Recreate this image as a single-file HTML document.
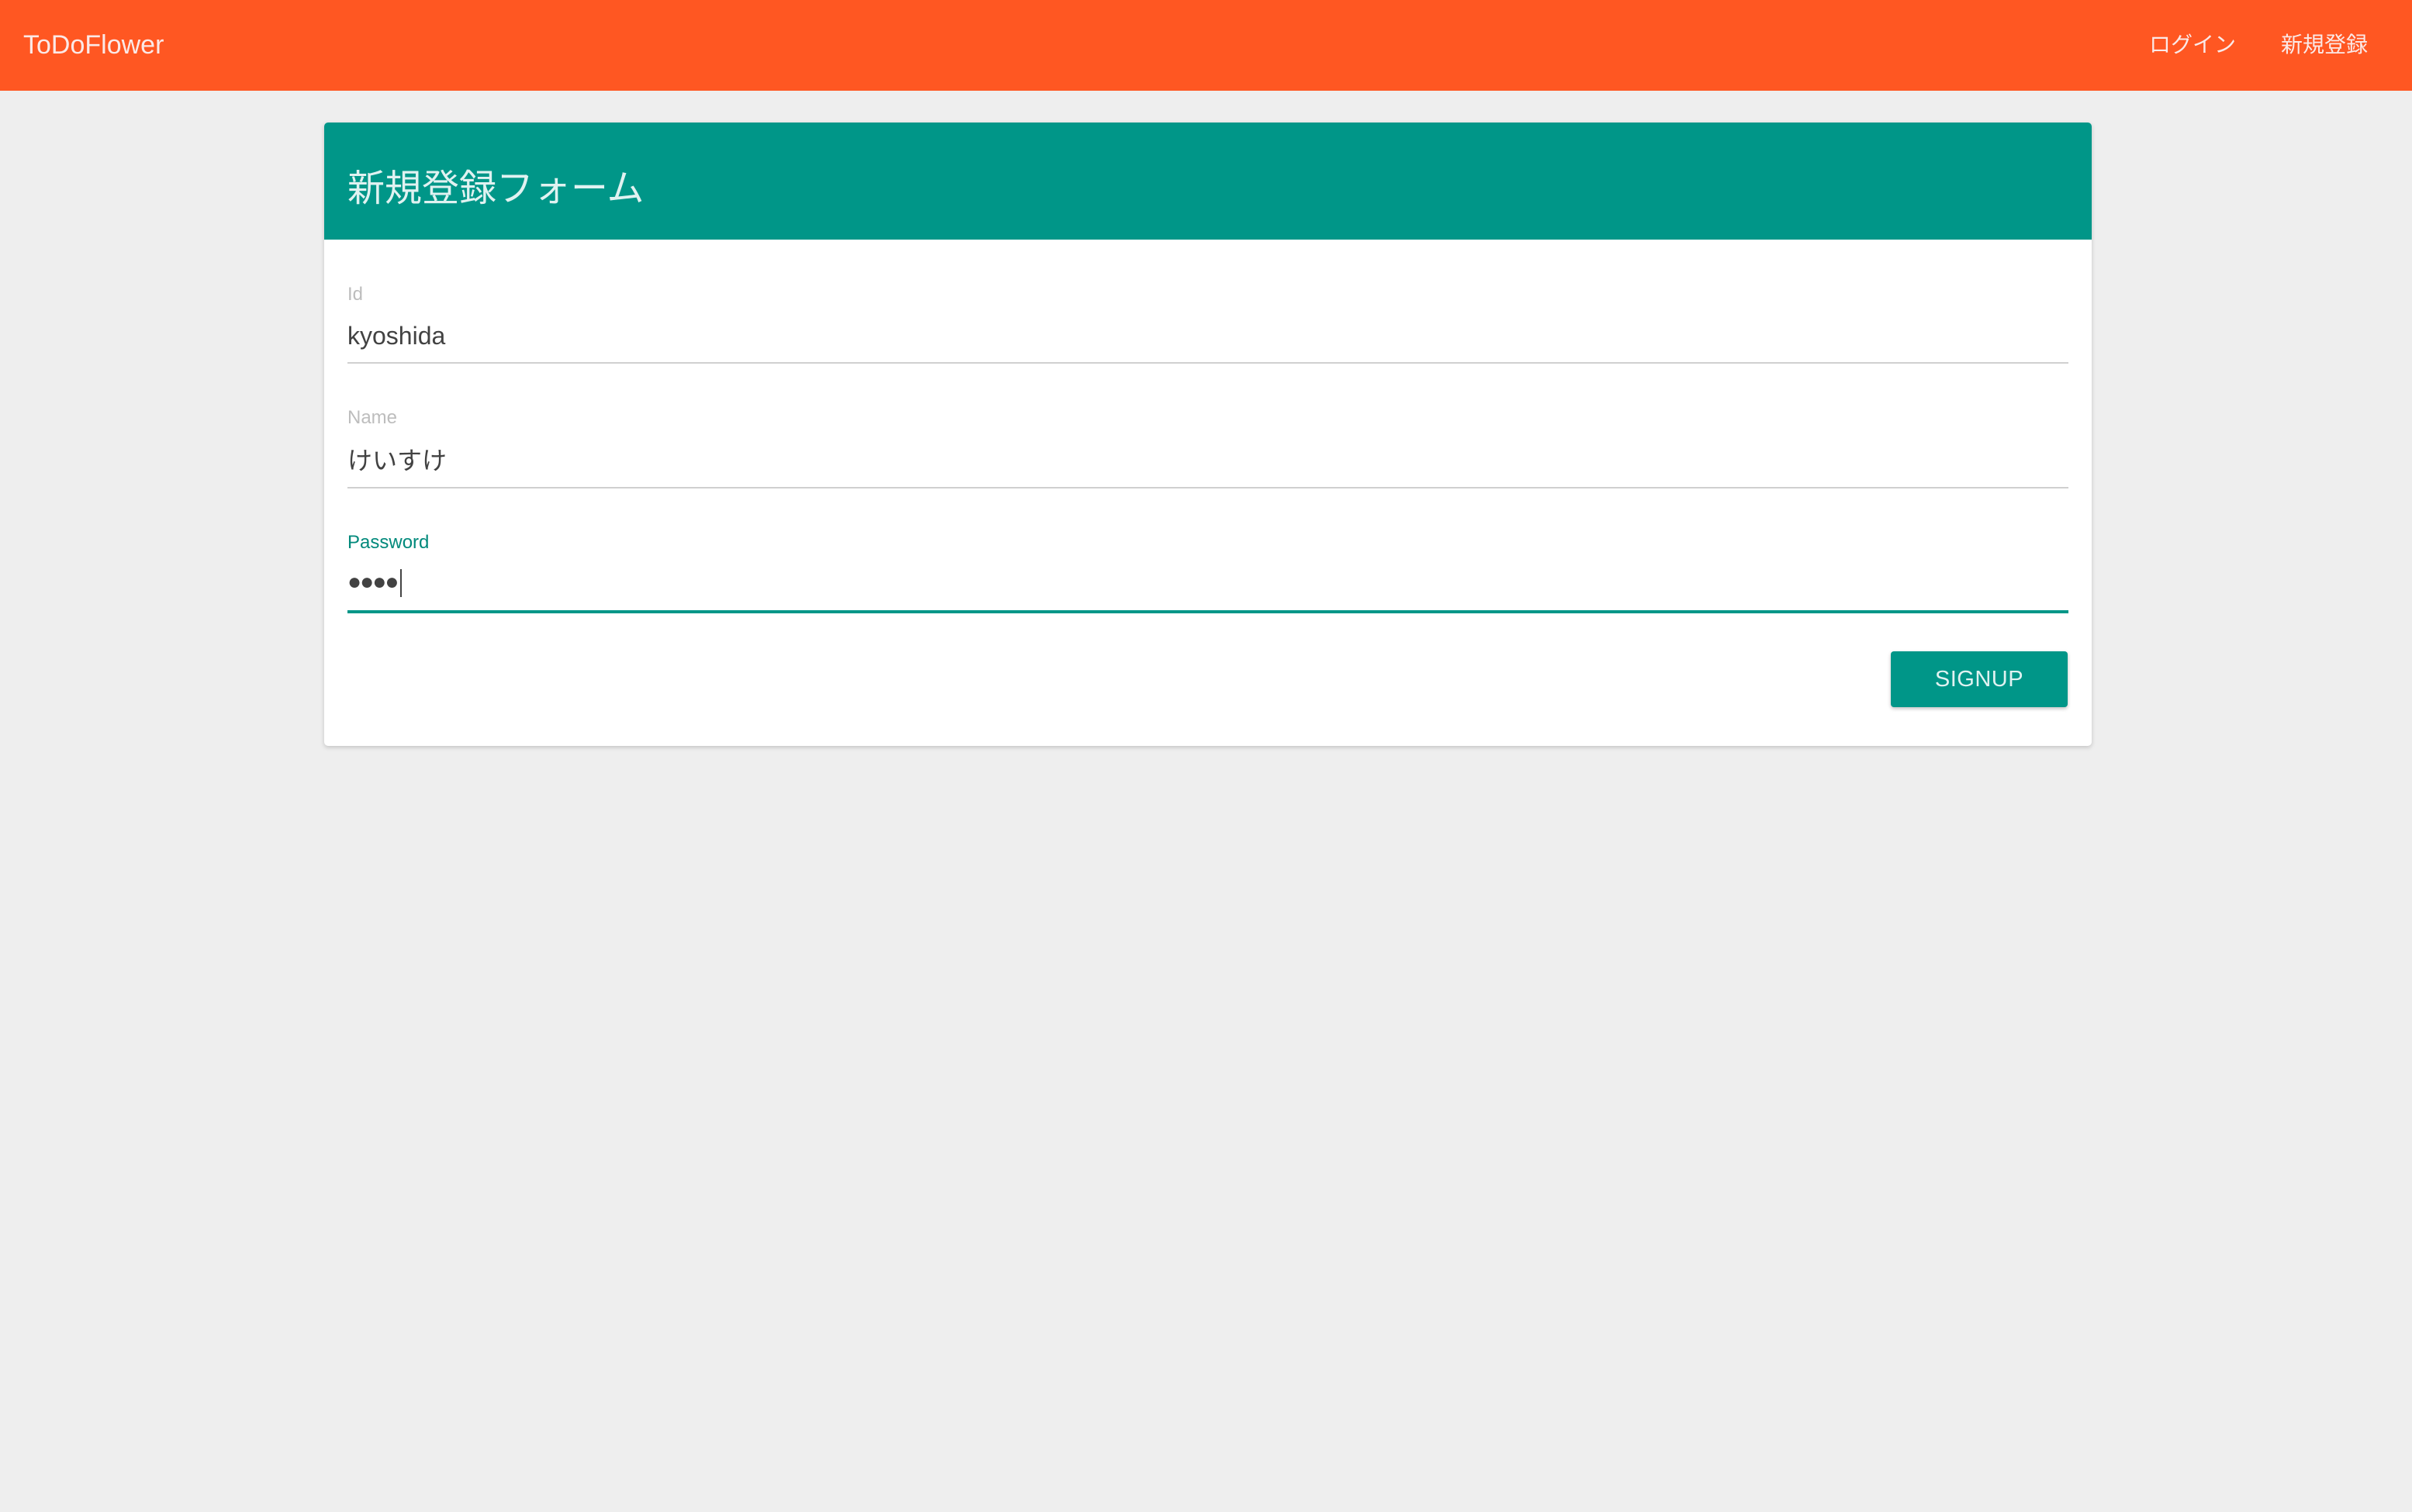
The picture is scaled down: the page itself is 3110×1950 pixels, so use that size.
<!DOCTYPE html>
<html><head><meta charset="utf-8"><style>
html,body{margin:0;padding:0;}
body{width:3110px;height:1950px;background:#eeeeee;position:relative;overflow:hidden;font-family:"Liberation Sans","Noto Sans CJK JP",sans-serif;}
.bar{position:absolute;left:0;top:0;width:3110px;height:117px;background:#ff5722;}
.brand{position:absolute;left:30px;top:38px;font-size:34px;line-height:40px;color:#fbe9e7;}
.nav{position:absolute;top:40px;font-size:28px;line-height:36px;color:#fbe9e7;}
.card{position:absolute;left:418px;top:158px;width:2279px;height:804px;background:#fff;border-radius:5px;box-shadow:0 2px 6px rgba(0,0,0,0.18);overflow:hidden;}
.chead{position:absolute;left:0;top:0;width:100%;height:151px;background:#009688;}
.ctitle{position:absolute;left:30px;top:56px;font-size:48px;line-height:60px;color:#e0f2f1;}
.lab{position:absolute;left:30px;font-size:24px;line-height:28px;color:#bdbdbd;}
.val{position:absolute;left:30px;font-size:32px;line-height:40px;color:#424242;}
.line{position:absolute;left:30px;width:2219px;height:2px;background:#d0d0d0;}
.btn{position:absolute;left:2020px;top:682px;width:228px;height:72px;background:#009688;border-radius:4px;box-shadow:0 2px 5px rgba(0,0,0,0.25);color:#e0f2f1;font-size:29px;font-weight:normal;text-align:center;line-height:72px;letter-spacing:0.5px;}
</style></head><body>
<div class="bar">
<div class="brand">ToDoFlower</div>
<div class="nav" style="left:2771px;">ログイン</div>
<div class="nav" style="left:2941px;">新規登録</div>
</div>
<div class="card">
<div class="chead"><div class="ctitle">新規登録フォーム</div></div>
<div class="lab" style="top:208px;">Id</div>
<div class="val" style="top:255px;">kyoshida</div>
<div class="line" style="top:309px;"></div>
<div class="lab" style="top:367px;">Name</div>
<div class="val" style="top:416px;">けいすけ</div>
<div class="line" style="top:470px;"></div>
<div class="lab" style="top:528px;color:#00897b;">Password</div>
<div class="val" style="top:573px;font-size:30px;letter-spacing:-2px;">●●●●<span style="display:inline-block;width:2px;height:36px;background:#444;vertical-align:middle;margin-left:4px;"></span></div>
<div class="line" style="top:629px;height:4px;background:#009688;"></div>
<div class="btn">SIGNUP</div>
</div>
</body></html>
